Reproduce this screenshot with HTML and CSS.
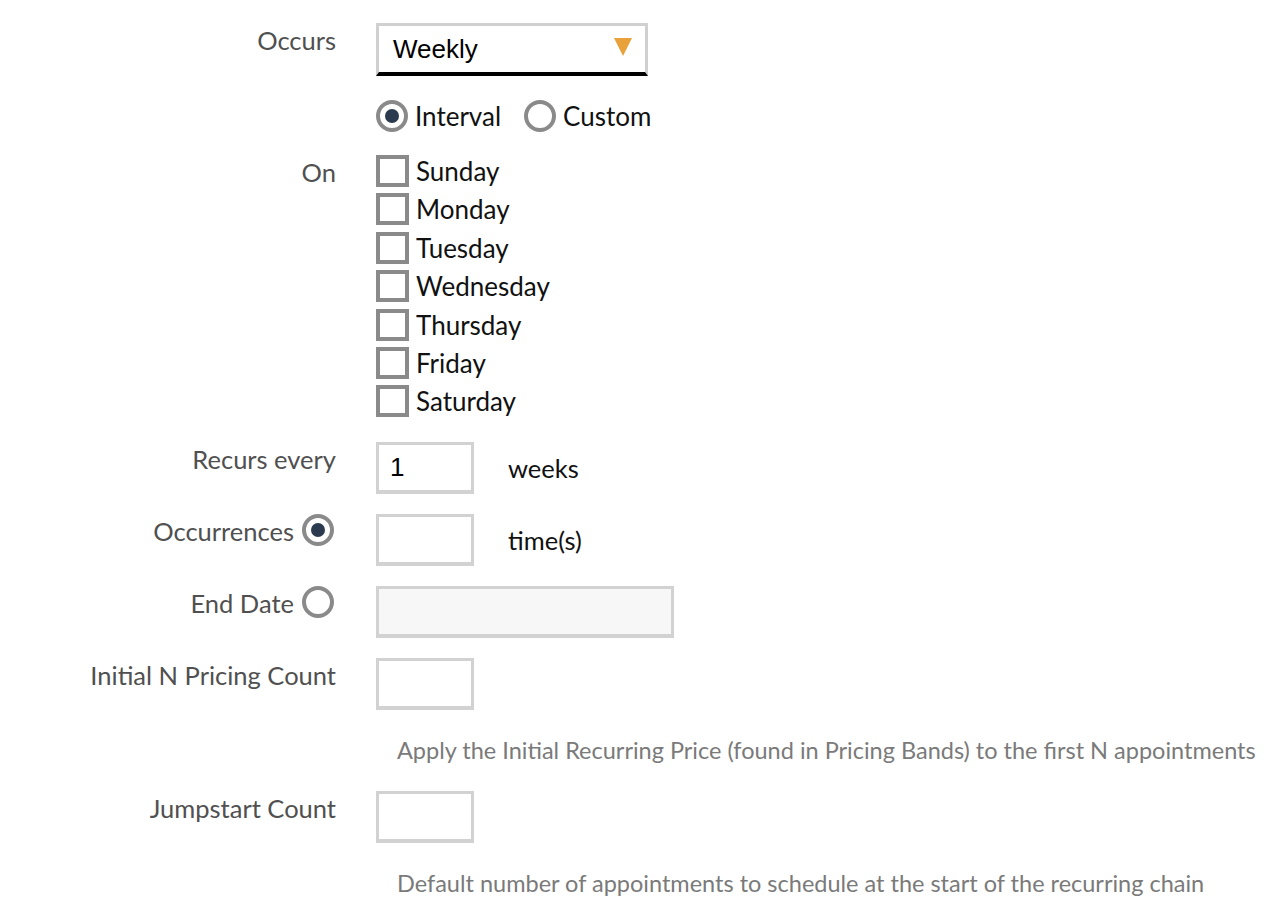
FILE: index.html
```html
<!DOCTYPE html>
<html>
<head>
<meta charset="utf-8">
<link rel="stylesheet" href="styles.css">
</head>
<body>
<form class="form">
  <div class="row">
    <div class="label">Occurs</div>
    <div class="field">
      <div class="select"><span class="select-value">Weekly</span><span class="caret"></span></div>
    </div>
  </div>
  <div class="row row-radios">
    <div class="label"></div>
    <div class="field radios">
      <span class="opt"><span class="radio checked"></span>Interval</span>
      <span class="opt"><span class="radio"></span>Custom</span>
    </div>
  </div>
  <div class="row row-days">
    <div class="label">On</div>
    <div class="field days">
      <div class="day"><span class="check"></span>Sunday</div>
      <div class="day"><span class="check"></span>Monday</div>
      <div class="day"><span class="check"></span>Tuesday</div>
      <div class="day"><span class="check"></span>Wednesday</div>
      <div class="day"><span class="check"></span>Thursday</div>
      <div class="day"><span class="check"></span>Friday</div>
      <div class="day"><span class="check"></span>Saturday</div>
    </div>
  </div>
  <div class="row row-input">
    <div class="label">Recurs every</div>
    <div class="field inline">
      <div class="input small"><span class="val">1</span></div>
      <span class="unit">weeks</span>
    </div>
  </div>
  <div class="row row-input">
    <div class="label">Occurrences <span class="radio checked"></span></div>
    <div class="field inline">
      <div class="input small"></div>
      <span class="unit">time(s)</span>
    </div>
  </div>
  <div class="row row-input">
    <div class="label">End Date <span class="radio"></span></div>
    <div class="field inline">
      <div class="input wide disabled"></div>
    </div>
  </div>
  <div class="row row-input">
    <div class="label">Initial N Pricing Count</div>
    <div class="field">
      <div class="input small"></div>
    </div>
  </div>
  <div class="row help-row">
    <div class="label"></div>
    <div class="help">Apply the Initial Recurring Price (found in Pricing Bands) to the first N appointments</div>
  </div>
  <div class="row row-input">
    <div class="label">Jumpstart Count</div>
    <div class="field">
      <div class="input small"></div>
    </div>
  </div>
  <div class="row help-row">
    <div class="label"></div>
    <div class="help">Default number of appointments to schedule at the start of the recurring chain</div>
  </div>
</form>
</body>
</html>
```
FILE: styles.css
```css
html, body {
  margin: 0;
  padding: 0;
  background: #fff;
}
body {
  font-family: "Lato", "Noto Sans", sans-serif;
  color: #111;
}
.form {
  padding-top: 23px;
}
.row {
  display: grid;
  grid-template-columns: 336px 1fr;
  column-gap: 40px;
}
.label {
  text-align: right;
  font-size: 25.5px;
  color: #505050;
  line-height: 30px;
  padding-top: 2px;
  display: flex;
  justify-content: flex-end;
  align-items: flex-start;
  gap: 8px;
  white-space: nowrap;
}
.label .radio {
  margin-top: -2px;
  margin-right: 2px;
}
.select {
  height: 46px;
  border: 3px solid #d0d0d0;
  border-bottom: 4px solid #000;
  display: flex;
  align-items: center;
  justify-content: space-between;
  padding: 0 13px 0 14px;
  box-sizing: content-box;
  width: 239px;
}
.select-value {
  font-family: "Liberation Sans", Arial, sans-serif;
  font-size: 26px;
  color: #000;
}
.caret {
  width: 0;
  height: 0;
  border-left: 9px solid transparent;
  border-right: 9px solid transparent;
  border-top: 18px solid #e9a23b;
  margin-top: -4px;
}
.row-radios {
  margin-top: 24px;
}
.radios {
  display: flex;
  gap: 23px;
  font-size: 26px;
  line-height: 32px;
  align-items: center;
}
.opt {
  display: flex;
  align-items: center;
  gap: 7px;
  color: #111;
}
.radio {
  display: inline-block;
  width: 24px;
  height: 24px;
  border: 4px solid #8a8a8a;
  border-radius: 50%;
  position: relative;
  flex: none;
  background: #fff;
}
.radio.checked::after {
  content: "";
  position: absolute;
  left: 5px;
  top: 5px;
  width: 14px;
  height: 14px;
  border-radius: 50%;
  background: #2b3a4e;
}
.row-days {
  margin-top: 23px;
}
.days {
  display: flex;
  flex-direction: column;
  gap: 6.4px;
}
.day {
  display: flex;
  align-items: center;
  gap: 7px;
  font-size: 26px;
  height: 32px;
  line-height: 32px;
  color: #111;
}
.check {
  width: 25px;
  height: 24px;
  border: 4px solid #8a8a8a;
  background: #fff;
  flex: none;
}
.row-input {
  margin-top: 20px;
}
.row-days + .row-input {
  margin-top: 25px;
}
.inline {
  display: flex;
  align-items: center;
  gap: 34px;
}
.input {
  height: 45px;
  border: 3px solid #d2d2d2;
  border-bottom-width: 4px;
  background: #fff;
  display: flex;
  align-items: center;
  padding-left: 11px;
  box-sizing: content-box;
}
.input.small {
  width: 81px;
}
.input.wide {
  width: 281px;
}
.input.disabled {
  background: #f7f7f7;
}
.val {
  font-family: "Liberation Sans", Arial, sans-serif;
  font-size: 26px;
  color: #000;
}
.unit {
  font-size: 25.5px;
  color: #111;
}
.help-row {
  margin-top: 26px;
}
.help {
  font-size: 23.5px;
  line-height: 28px;
  color: #7a7a7a;
  padding-left: 21px;
  white-space: nowrap;
}
.help-row + .row-input {
  margin-top: 27px;
}
```
